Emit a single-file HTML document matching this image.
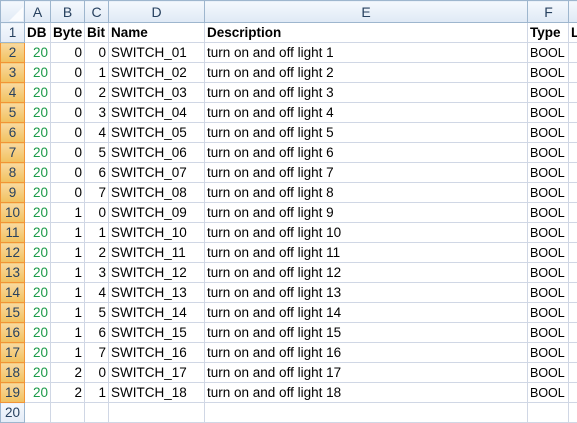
<!DOCTYPE html>
<html><head><meta charset="utf-8"><style>
body{margin:0;width:577px;height:411px;overflow:hidden;background:#fff;font-family:"Liberation Sans",sans-serif;font-size:13.5px;color:#000;position:relative}
table{border-collapse:collapse;table-layout:fixed;position:absolute;left:0;top:0;width:588px}
td{border:1px solid #d0d7e5;height:20px;padding:0 2px;white-space:nowrap;overflow:hidden;box-sizing:border-box;line-height:18px}
tr.h td{height:22px;background:linear-gradient(#f4f8fd,#dfe9f5);border-color:#9eb6ce;text-align:center;color:#27415f;font-size:14px}
td.rh{background:linear-gradient(#f4f8fd,#e4ecf7);border-color:#9eb6ce;text-align:center;color:#27415f;padding:0}
td.sel{background:linear-gradient(#f9d99f,#f1c15f);border-color:#f29436;color:#27415f}
td.g{color:#1a9a48;text-align:right}
td.r{text-align:right}
tr.b td.c{font-weight:bold}
td.corner{background:#dfe9f5}
td:nth-child(7){padding:0 1px 0 2px}
tr:not(.b) td:nth-child(7){font-size:12.5px}
</style></head><body>
<table>
<colgroup><col style="width:24px"><col style="width:26px"><col style="width:34px"><col style="width:24px"><col style="width:96px"><col style="width:323px"><col style="width:41px"><col style="width:20px"></colgroup>
<tr class="h"><td class="corner"><svg width="14" height="14" style="display:block;margin:5px 0 0 6px"><polygon points="14,0 14,14 0,14" fill="#fff" opacity=".8"/></svg></td><td>A</td><td>B</td><td>C</td><td>D</td><td>E</td><td style="font-size:14px">F</td><td></td></tr>
<tr class="b"><td class="rh">1</td><td class="c">DB</td><td class="c">Byte</td><td class="c">Bit</td><td class="c">Name</td><td class="c">Description</td><td class="c">Type</td><td class="c">L</td></tr>
<tr><td class="rh sel">2</td><td class="g">20</td><td class="r">0</td><td class="r">0</td><td>SWITCH_01</td><td>turn on and off light 1</td><td>BOOL</td><td></td></tr>
<tr><td class="rh sel">3</td><td class="g">20</td><td class="r">0</td><td class="r">1</td><td>SWITCH_02</td><td>turn on and off light 2</td><td>BOOL</td><td></td></tr>
<tr><td class="rh sel">4</td><td class="g">20</td><td class="r">0</td><td class="r">2</td><td>SWITCH_03</td><td>turn on and off light 3</td><td>BOOL</td><td></td></tr>
<tr><td class="rh sel">5</td><td class="g">20</td><td class="r">0</td><td class="r">3</td><td>SWITCH_04</td><td>turn on and off light 4</td><td>BOOL</td><td></td></tr>
<tr><td class="rh sel">6</td><td class="g">20</td><td class="r">0</td><td class="r">4</td><td>SWITCH_05</td><td>turn on and off light 5</td><td>BOOL</td><td></td></tr>
<tr><td class="rh sel">7</td><td class="g">20</td><td class="r">0</td><td class="r">5</td><td>SWITCH_06</td><td>turn on and off light 6</td><td>BOOL</td><td></td></tr>
<tr><td class="rh sel">8</td><td class="g">20</td><td class="r">0</td><td class="r">6</td><td>SWITCH_07</td><td>turn on and off light 7</td><td>BOOL</td><td></td></tr>
<tr><td class="rh sel">9</td><td class="g">20</td><td class="r">0</td><td class="r">7</td><td>SWITCH_08</td><td>turn on and off light 8</td><td>BOOL</td><td></td></tr>
<tr><td class="rh sel">10</td><td class="g">20</td><td class="r">1</td><td class="r">0</td><td>SWITCH_09</td><td>turn on and off light 9</td><td>BOOL</td><td></td></tr>
<tr><td class="rh sel">11</td><td class="g">20</td><td class="r">1</td><td class="r">1</td><td>SWITCH_10</td><td>turn on and off light 10</td><td>BOOL</td><td></td></tr>
<tr><td class="rh sel">12</td><td class="g">20</td><td class="r">1</td><td class="r">2</td><td>SWITCH_11</td><td>turn on and off light 11</td><td>BOOL</td><td></td></tr>
<tr><td class="rh sel">13</td><td class="g">20</td><td class="r">1</td><td class="r">3</td><td>SWITCH_12</td><td>turn on and off light 12</td><td>BOOL</td><td></td></tr>
<tr><td class="rh sel">14</td><td class="g">20</td><td class="r">1</td><td class="r">4</td><td>SWITCH_13</td><td>turn on and off light 13</td><td>BOOL</td><td></td></tr>
<tr><td class="rh sel">15</td><td class="g">20</td><td class="r">1</td><td class="r">5</td><td>SWITCH_14</td><td>turn on and off light 14</td><td>BOOL</td><td></td></tr>
<tr><td class="rh sel">16</td><td class="g">20</td><td class="r">1</td><td class="r">6</td><td>SWITCH_15</td><td>turn on and off light 15</td><td>BOOL</td><td></td></tr>
<tr><td class="rh sel">17</td><td class="g">20</td><td class="r">1</td><td class="r">7</td><td>SWITCH_16</td><td>turn on and off light 16</td><td>BOOL</td><td></td></tr>
<tr><td class="rh sel">18</td><td class="g">20</td><td class="r">2</td><td class="r">0</td><td>SWITCH_17</td><td>turn on and off light 17</td><td>BOOL</td><td></td></tr>
<tr><td class="rh sel">19</td><td class="g">20</td><td class="r">2</td><td class="r">1</td><td>SWITCH_18</td><td>turn on and off light 18</td><td>BOOL</td><td></td></tr>
<tr><td class="rh">20</td><td></td><td></td><td></td><td></td><td></td><td></td><td></td></tr>
</table>
</body></html>
